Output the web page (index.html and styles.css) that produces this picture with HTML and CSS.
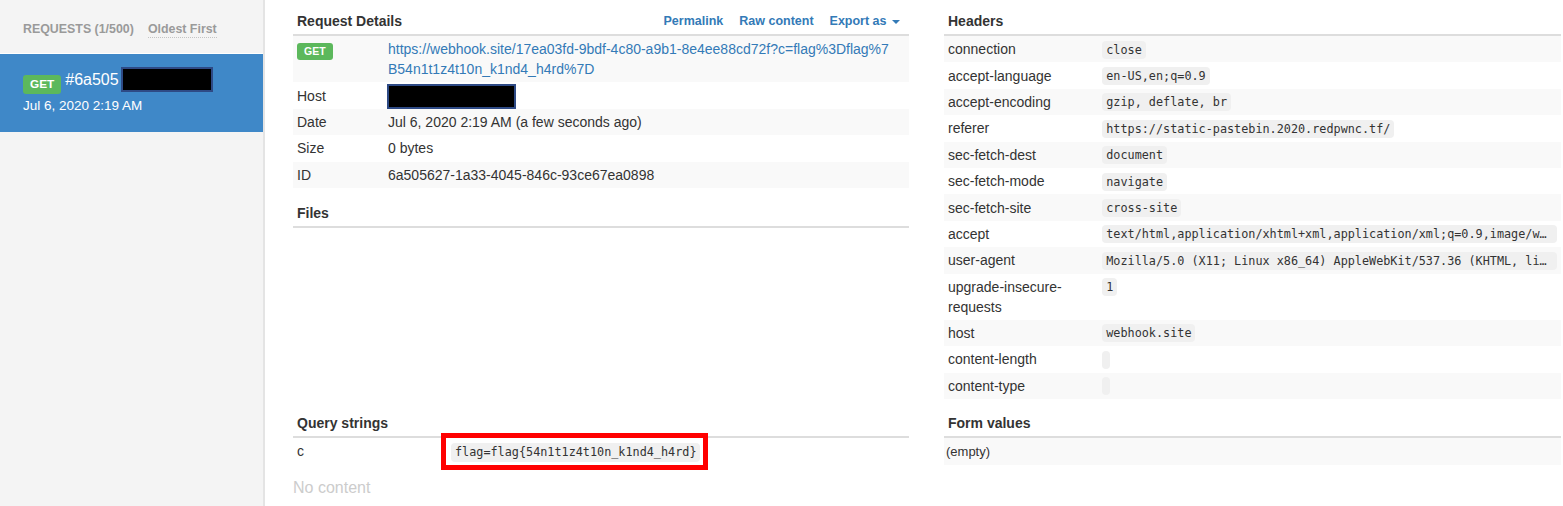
FILE: index.html
```html
<!DOCTYPE html>
<html lang="en">
<head>
<meta charset="utf-8">
<title>Webhook.site</title>
<link rel="stylesheet" href="styles.css">
</head>
<body>
<div class="app">
  <aside class="sidebar">
    <div class="side-head">
      <span class="side-title">Requests (1/500)</span>
      <span class="side-sort">Oldest First</span>
    </div>
    <div class="req-item">
      <div class="req-line">
        <span class="badge badge-lg">GET</span>
        <span class="req-id">#6a505</span>
        <span class="redact redact-side"></span>
      </div>
      <div class="req-date">Jul 6, 2020 2:19 AM</div>
    </div>
  </aside>

  <main class="main">
    <section class="col">
      <div class="sec-head">
        <h3>Request Details</h3>
        <nav class="links">
          <a href="#">Permalink</a>
          <a href="#">Raw content</a>
          <a href="#">Export as <span class="caret"></span></a>
        </nav>
      </div>
      <table class="tbl striped">
        <colgroup><col class="k-narrow"><col></colgroup>
        <tr>
          <td><span class="badge badge-row">GET</span></td>
          <td class="url-cell"><a class="url" href="#">https://webhook.site/17ea03fd-9bdf-4c80-a9b1-8e4ee88cd72f?c=flag%3Dflag%7B54n1t1z4t10n_k1nd4_h4rd%7D</a></td>
        </tr>
        <tr><td>Host</td><td><span class="redact redact-host"></span></td></tr>
        <tr><td>Date</td><td>Jul 6, 2020 2:19 AM (a few seconds ago)</td></tr>
        <tr><td>Size</td><td>0 bytes</td></tr>
        <tr><td>ID</td><td>6a505627-1a33-4045-846c-93ce67ea0898</td></tr>
      </table>
      <div class="sec-head files-head"><h3>Files</h3></div>
    </section>

    <section class="col">
      <div class="sec-head"><h3>Headers</h3></div>
      <table class="tbl striped hv">
        <colgroup><col class="k-wide"><col></colgroup>
        <tr><td>connection</td><td><code>close</code></td></tr>
        <tr><td>accept-language</td><td><code>en-US,en;q=0.9</code></td></tr>
        <tr><td>accept-encoding</td><td><code>gzip, deflate, br</code></td></tr>
        <tr><td>referer</td><td><code>https://static-pastebin.2020.redpwnc.tf/</code></td></tr>
        <tr><td>sec-fetch-dest</td><td><code>document</code></td></tr>
        <tr><td>sec-fetch-mode</td><td><code>navigate</code></td></tr>
        <tr><td>sec-fetch-site</td><td><code>cross-site</code></td></tr>
        <tr><td>accept</td><td><code>text/html,application/xhtml+xml,application/xml;q=0.9,image/webp,image/apng,*/*;q=0.8,application/signed-exchange;v=b3;q=0.9</code></td></tr>
        <tr><td>user-agent</td><td><code>Mozilla/5.0 (X11; Linux x86_64) AppleWebKit/537.36 (KHTML, like Gecko) Chrome/83.0.4103.116 Safari/537.36</code></td></tr>
        <tr><td>upgrade-insecure-requests</td><td><code>1</code></td></tr>
        <tr><td>host</td><td><code>webhook.site</code></td></tr>
        <tr><td>content-length</td><td><code></code></td></tr>
        <tr><td>content-type</td><td><code></code></td></tr>
      </table>
    </section>

    <section class="col">
      <div class="sec-head"><h3>Query strings</h3></div>
      <table class="tbl">
        <colgroup><col class="k-wide"><col></colgroup>
        <tr><td>c</td><td><span class="flag"><code>flag=flag{54n1t1z4t10n_k1nd4_h4rd}</code></span></td></tr>
      </table>
      <p class="no-content">No content</p>
    </section>

    <section class="col">
      <div class="sec-head"><h3>Form values</h3></div>
      <table class="tbl striped">
        <tr><td class="empty">(empty)</td></tr>
      </table>
    </section>
  </main>
</div>
</body>
</html>
```

FILE: styles.css
```css
* { box-sizing: border-box; }

html, body {
  margin: 0;
  height: 100%;
}

body {
  font-family: "Liberation Sans", Arial, sans-serif;
  font-size: 14px;
  color: #333;
  background: #fff;
}

.app {
  display: flex;
  height: 100vh;
  overflow: hidden;
}

/* ---------- sidebar ---------- */
.sidebar {
  width: 265px;
  flex: none;
  background: #f4f4f4;
  border-right: 2px solid #e4e4e4;
}

.side-head {
  height: 53px;
  padding: 21px 0 0 23px;
  display: flex;
  align-items: flex-start;
  gap: 14px;
  font-size: 12.4px;
  font-weight: bold;
  line-height: 16px;
  color: #9a9a9a;
}

.side-title { text-transform: uppercase; }

.side-sort { border-bottom: 1px dotted #c4c4c4; }

.req-item {
  height: 79px;
  border-top: 1px solid #fff;
  background: #3f88c8;
  padding: 13px 23px 0;
  color: #fff;
}

.req-line {
  display: flex;
  align-items: flex-start;
  height: 25px;
}

.req-id {
  font-size: 16px;
  line-height: 25px;
  margin-left: 4px;
}

.req-date {
  margin-top: 6px;
  font-size: 13.5px;
  line-height: 16px;
}

.badge {
  display: inline-block;
  background: #5cb85c;
  color: #fff;
  font-weight: bold;
  font-size: 10.5px;
  line-height: 1;
  padding: 3px 7px 3.5px;
  border-radius: 3px;
}

.badge-lg {
  font-size: 11.8px;
  padding: 3.5px 7px 3.5px;
  margin-top: 8px;
}

.badge-row {
  vertical-align: top;
  margin-top: 3.5px;
}

.redact {
  display: inline-block;
  background: #000;
  border: 2px solid #2e4a85;
}

.redact-side {
  width: 92px;
  height: 25px;
  margin-left: 2px;
}

.redact-host {
  display: block;
  width: 129px;
  height: 25px;
  margin: -1.6px 0 -3.4px -1px;
}

/* ---------- main ---------- */
.main {
  flex: 1;
  padding: 8px 0 0 28px;
  display: grid;
  grid-template-columns: 616px 617px;
  column-gap: 35px;
  row-gap: 11px;
  align-content: start;
}

.col { min-width: 0; }

.sec-head {
  display: flex;
  justify-content: space-between;
  align-items: center;
  padding: 3px 9px 3px 4px;
  border-bottom: 2px solid #ddd;
  line-height: 20px;
}

.sec-head h3 {
  margin: 0;
  font-size: 14px;
  font-weight: bold;
}

.files-head { margin-top: 12px; }

.links {
  display: flex;
  gap: 16px;
  font-size: 12.5px;
  font-weight: bold;
}

.links a {
  color: #337ab7;
  text-decoration: none;
}

.caret {
  display: inline-block;
  width: 0;
  height: 0;
  margin-left: 2px;
  vertical-align: middle;
  border-top: 4px solid #337ab7;
  border-left: 4px solid transparent;
  border-right: 4px solid transparent;
}

.tbl {
  width: 100%;
  border-collapse: collapse;
  table-layout: fixed;
}

.tbl td {
  padding: 3.2px 4px;
  line-height: 20px;
  height: 26.4px;
  vertical-align: top;
}

.striped tr:nth-child(odd) td { background: #f9f9f9; }

.k-narrow { width: 91px; }
.k-wide { width: 25%; }

.tbl td.url-cell { padding-right: 14px; }

.url {
  color: #337ab7;
  text-decoration: none;
  word-break: break-all;
}

code {
  display: inline-block;
  max-width: 100%;
  height: 18px;
  vertical-align: top;
  margin-top: 1.4px;
  font-family: "DejaVu Sans Mono", "Liberation Mono", monospace;
  font-size: 11.8px;
  line-height: 14px;
  padding: 2px 4px;
  background: #f0f0f0;
  color: #333;
  border-radius: 4px;
  white-space: nowrap;
  overflow: hidden;
  text-overflow: ellipsis;
}

.flag {
  position: relative;
  display: inline-block;
  vertical-align: top;
  margin-top: 1.6px;
  height: 19px;
}

.flag code {
  height: 19px;
  margin-top: 0;
  padding-top: 2.5px;
}

.flag::after {
  content: "";
  position: absolute;
  left: -10px;
  right: -8px;
  top: -10px;
  bottom: -8.5px;
  border: 5px solid #f00;
}

.tbl td.empty {
  font-size: 13px;
  padding-left: 2px;
  padding-top: 4px;
}

.no-content {
  margin: 13px 0 0;
  font-size: 16px;
  line-height: 20px;
  color: #ccc;
}
```
